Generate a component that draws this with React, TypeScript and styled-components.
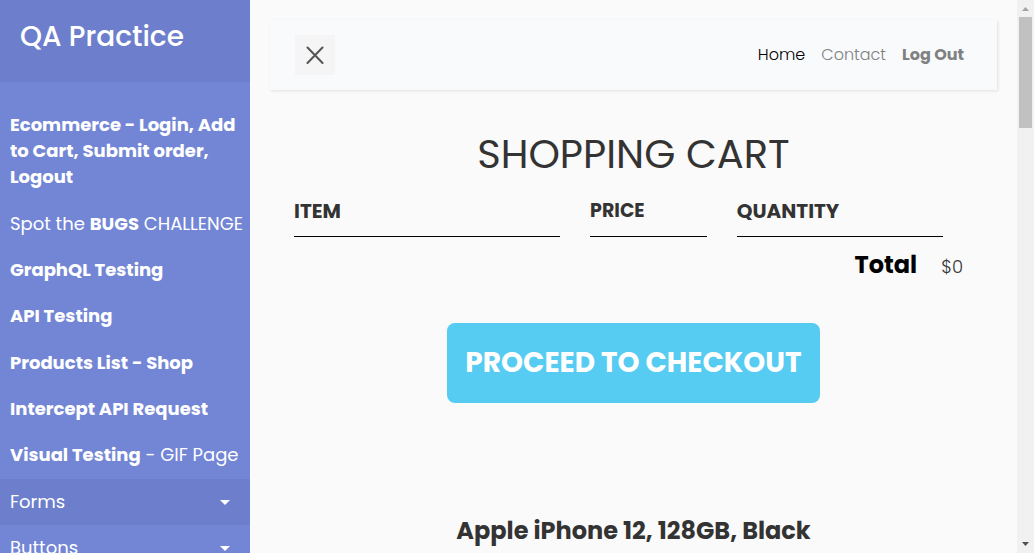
import React from "react";
import styled, { createGlobalStyle } from "styled-components";

const GlobalStyle = createGlobalStyle`
  *, *::before, *::after { box-sizing: border-box; }
  html, body { margin: 0; padding: 0; }
  body {
    background: #fafafa;
    color: #333;
    font-family: Poppins, Inter, "Liberation Sans", sans-serif;
    font-size: 16px;
    font-weight: 300;
  }
  a { color: inherit; text-decoration: none; }
  ul { list-style: none; margin: 0; padding: 0; }
`;

const Page = styled.div`
  display: flex;
  height: 100vh;
  overflow: hidden;
`;

const Sidebar = styled.nav`
  flex: 0 0 250px;
  background: #7386d5;
  color: #fff;
  overflow: hidden;
`;

const SidebarHeader = styled.div`
  padding: 20px 20px 28px;
  background: #6d7fcc;
`;

const Brand = styled.h3`
  margin: 0;
  font-size: 28px;
  line-height: 34px;
  font-weight: 500;
`;

const Menu = styled.div`
  display: flex;
  flex-direction: column;
  gap: 1px;
  padding-top: 20px;
`;

const MenuLink = styled.a<{ $active?: boolean }>`
  display: flex;
  justify-content: space-between;
  align-items: center;
  padding: 10px 0 10px 10px;
  font-size: 18px;
  line-height: 26px;
  font-weight: 400;
  white-space: pre-line;
  background: ${(p) => (p.$active ? "#6d7fcc" : "transparent")};
  b { font-weight: 700; }
`;

const Caret = styled.span`
  margin-right: 20px;
  border: 5px solid transparent;
  border-top-color: #fff;
  border-bottom-width: 0;
`;

const Content = styled.main`
  flex: 1;
  min-width: 0;
  padding: 20px;
  overflow: hidden;
`;

const Navbar = styled.header`
  display: flex;
  align-items: center;
  justify-content: space-between;
  padding: 15px 33px 15px 25px;
  margin-bottom: 40px;
  background: #f8fafc;
  box-shadow: 1px 1px 3px rgba(0, 0, 0, 0.1);
`;

const CloseButton = styled.button`
  display: grid;
  place-items: center;
  width: 40px;
  height: 40px;
  padding: 0;
  border: 0;
  background: #f5f5f5;
  cursor: pointer;
`;

const NavLinks = styled.ul`
  display: flex;
  gap: 16px;
  padding-bottom: 2px;
`;

const NavLink = styled.a<{ $tone?: "active" | "strong" }>`
  color: ${(p) => (p.$tone === "active" ? "#000" : "#808081")};
  font-size: 16px;
  line-height: 24px;
  font-weight: ${(p) => (p.$tone === "strong" ? 700 : 300)};
`;

const Cart = styled.section`
  padding: 0 24px;
  text-align: center;
`;

const CartTitle = styled.h1`
  margin: 0 0 8px;
  font-size: 40px;
  line-height: 48px;
  font-weight: 400;
`;

const CartTable = styled.table`
  width: 100%;
  table-layout: fixed;
  border-collapse: collapse;
  text-align: left;
`;

const HeadCell = styled.th<{ $share: number }>`
  width: ${(p) => p.$share}%;
  padding: 0 30px 0 0;
`;

const HeadLabel = styled.span<{ $small?: boolean }>`
  display: block;
  padding: 11px 0;
  border-bottom: 1px solid #000;
  font-size: ${(p) => (p.$small ? 19 : 20)}px;
  line-height: 28px;
  font-weight: 700;
`;

const TotalRow = styled.div`
  display: flex;
  justify-content: flex-end;
  align-items: baseline;
  gap: 24px;
  padding: 10px 10px 0 0;
  line-height: 36px;
`;

const TotalLabel = styled.strong`
  color: #000;
  font-size: 24px;
  font-weight: 700;
`;

const TotalPrice = styled.span`
  font-size: 18px;
`;

const CheckoutButton = styled.button`
  margin: 38px 0 108px;
  padding: 20px 18px;
  border: 0;
  border-radius: 8px;
  background: #56ccf2;
  color: #fff;
  font-family: inherit;
  font-size: 28px;
  line-height: 40px;
  font-weight: 700;
  cursor: pointer;
`;

const ProductName = styled.h2`
  margin: 0;
  font-size: 24px;
  line-height: 40px;
  font-weight: 700;
`;

const ScrollRail = styled.div`
  flex: 0 0 17px;
  display: flex;
  flex-direction: column;
  align-items: center;
  justify-content: space-between;
  background: #f1f1f1;
`;

const ScrollTop = styled.div`
  display: flex;
  flex-direction: column;
  align-items: center;
`;

const ScrollArrow = styled.svg`
  display: block;
  width: 17px;
  height: 17px;
`;

const ScrollThumb = styled.div`
  width: 13px;
  height: 111px;
  background: #c1c1c1;
`;

const DropdownLink = ({ label, active }: { label: string; active?: boolean }) => (
  <li>
    <MenuLink href="#" $active={active} aria-haspopup="true">
      {label}
      <Caret />
    </MenuLink>
  </li>
);

const BoldLink = ({ label }: { label: string }) => (
  <li>
    <MenuLink href="#">
      <b>{label}</b>
    </MenuLink>
  </li>
);

export default function App() {
  return (
    <>
      <GlobalStyle />
      <Page>
        <Sidebar>
          <SidebarHeader>
            <Brand>QA Practice</Brand>
          </SidebarHeader>
          <Menu>
            <ul>
              <BoldLink label={"Ecommerce - Login, Add\nto Cart, Submit order,\nLogout"} />
            </ul>
            <ul>
              <li>
                <MenuLink href="#">
                  <span>
                    Spot the <b>BUGS</b> CHALLENGE
                  </span>
                </MenuLink>
              </li>
              <BoldLink label="GraphQL Testing" />
              <BoldLink label="API Testing" />
            </ul>
            <ul>
              <BoldLink label="Products List - Shop" />
              <BoldLink label="Intercept API Request" />
              <li>
                <MenuLink href="#">
                  <span>
                    <b>Visual Testing</b> - GIF Page
                  </span>
                </MenuLink>
              </li>
            </ul>
            <ul>
              <DropdownLink label="Forms" active />
              <DropdownLink label="Buttons" />
            </ul>
          </Menu>
        </Sidebar>
        <Content>
          <Navbar>
            <CloseButton type="button" aria-label="Toggle sidebar">
              <svg width="18" height="18" viewBox="0 0 18 18" aria-hidden="true">
                <path d="M1.500 1.500L16.500 17M16.500 1.500L1.500 17" stroke="#555" strokeWidth="2" strokeLinecap="round" />
              </svg>
            </CloseButton>
            <NavLinks>
              <li><NavLink href="#" $tone="active">Home</NavLink></li>
              <li><NavLink href="#">Contact</NavLink></li>
              <li><NavLink href="#" $tone="strong">Log Out</NavLink></li>
            </NavLinks>
          </Navbar>
          <Cart>
            <CartTitle>SHOPPING CART</CartTitle>
            <CartTable>
              <thead>
                <tr>
                  <HeadCell scope="col" $share={43.6}><HeadLabel>ITEM</HeadLabel></HeadCell>
                  <HeadCell scope="col" $share={21.6}><HeadLabel $small>PRICE</HeadLabel></HeadCell>
                  <HeadCell scope="col" $share={34.8}><HeadLabel>QUANTITY</HeadLabel></HeadCell>
                </tr>
              </thead>
            </CartTable>
            <TotalRow>
              <TotalLabel>Total</TotalLabel>
              <TotalPrice>$0</TotalPrice>
            </TotalRow>
            <CheckoutButton type="button">PROCEED TO CHECKOUT</CheckoutButton>
            <ProductName>Apple iPhone 12, 128GB, Black</ProductName>
          </Cart>
        </Content>
        <ScrollRail aria-hidden="true">
          <ScrollTop>
            <ScrollArrow viewBox="0 0 17 17"><path d="M5 11L8.500 7L12 11Z" fill="#a3a3a3" /></ScrollArrow>
            <ScrollThumb />
          </ScrollTop>
          <ScrollArrow viewBox="0 0 17 17"><path d="M5 6L12 6L8.500 10Z" fill="#505050" /></ScrollArrow>
        </ScrollRail>
      </Page>
    </>
  );
}
